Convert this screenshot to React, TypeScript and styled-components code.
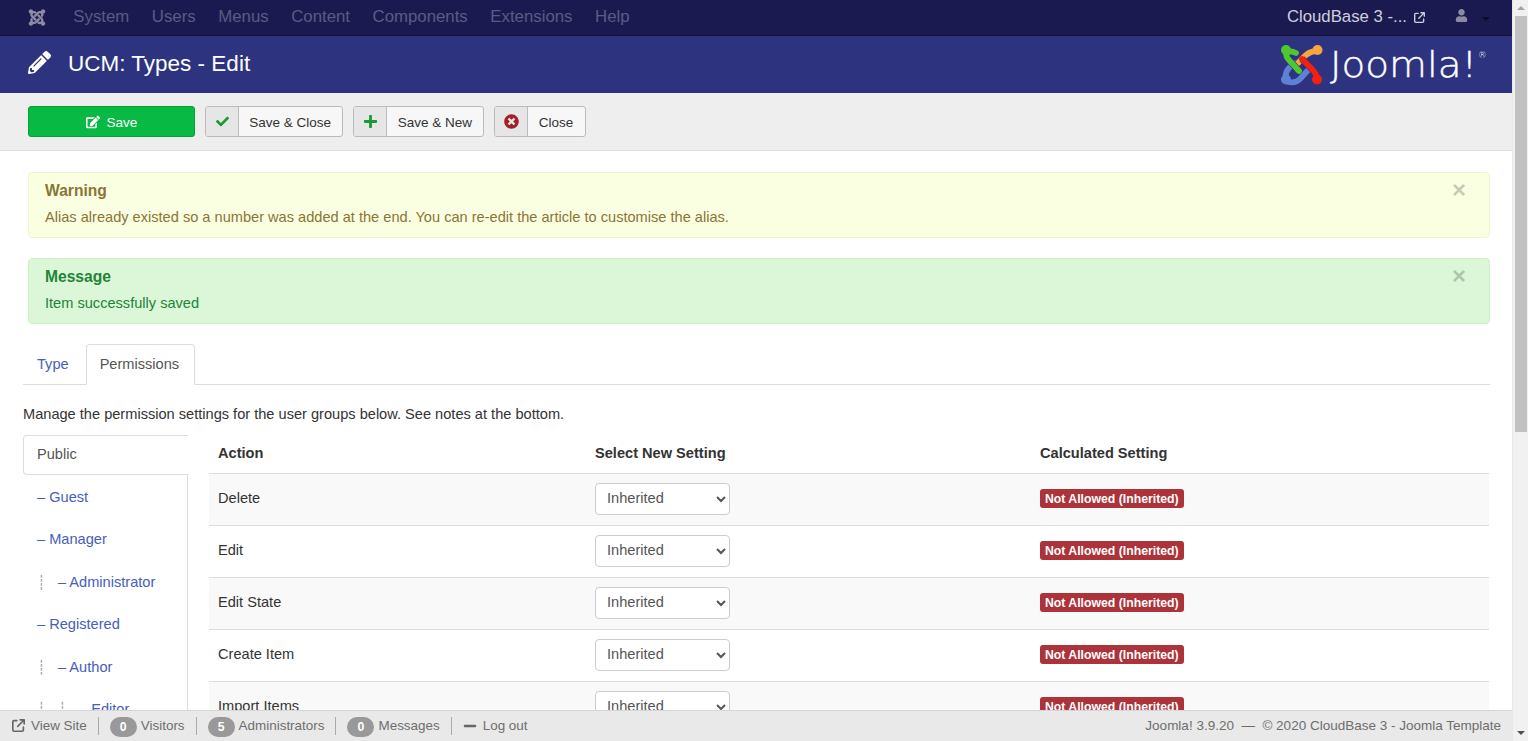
import { createGlobalStyle, styled } from "styled-components";
import { FaCheck, FaEdit, FaJoomla, FaMinus, FaPencilAlt, FaPlus, FaTimesCircle, FaUser } from "react-icons/fa";
import { FaArrowUpRightFromSquare } from "react-icons/fa6";

const GlobalStyle = createGlobalStyle`
  * { box-sizing: border-box; }
  html, body { margin: 0; height: 100%; overflow: hidden; }
  body {
    font-family: "Liberation Sans", Arial, sans-serif;
    font-size: 14.6px;
    color: #333;
    background: #fff;
  }
`;

const linkColor = "#4560bb";

const Page = styled.div`
  display: flex;
  height: 100vh;
  overflow: hidden;
`;
const Main = styled.div`
  flex: 1;
  min-width: 0;
  display: flex;
  flex-direction: column;
`;

// top menu
const NavBar = styled.div`
  height: 36px;
  flex: none;
  display: flex;
  align-items: center;
  padding: 0 22px 1px 28px;
  background: #1b1a50;
  border-bottom: 1px solid #14133a;
`;
const NavLogo = styled.span`
  display: flex;
  width: 18px;
  margin-right: 16px;
  color: #8c8aa5;
  font-size: 19px;
`;
const NavItem = styled.span`
  padding: 0 11.3px;
  font-size: 16.8px;
  color: #5b5a84;
`;
const NavRight = styled.div`
  margin-left: auto;
  display: flex;
  align-items: center;
  color: #cfcfdb;
  font-size: 16.75px;
`;
const NavIcon = styled.span`
  display: flex;
  margin-left: 7px;
  font-size: 11px;
`;
const NavUser = styled.span`
  display: flex;
  margin-left: 30px;
  margin-top: -3px;
  color: #8c8aa5;
  font-size: 13px;
`;
const Caret = styled.span`
  width: 0;
  height: 0;
  margin-left: 14px;
  margin-top: 3px;
  border-left: 4px solid transparent;
  border-right: 4px solid transparent;
  border-top: 4px solid #0c0b2c;
`;

// page title
const TitleBar = styled.div`
  height: 57px;
  flex: none;
  display: flex;
  align-items: center;
  padding: 0 28px;
  background: #2d337f;
  color: #fff;
`;
const TitleIcon = styled.span`
  display: flex;
  font-size: 23px;
  margin-right: 17px;
  margin-top: -5px;
`;
const Title = styled.h1`
  margin: -2px 0 0;
  font-size: 22.5px;
  font-weight: 400;
`;
const Brand = styled.div`
  margin-left: auto;
  display: flex;
  align-items: center;
`;
const Wordmark = styled.span`
  position: relative;
  width: 154px;
  margin-left: 7px;
  font-family: "DejaVu Sans", sans-serif;
  font-weight: 200;
  font-size: 36px;
  line-height: 40px;
  color: #fff;
  -webkit-text-stroke: 0.4px #fff;
  transform: scaleX(1.08);
  transform-origin: left center;
  white-space: nowrap;
  sup {
    position: absolute;
    left: 137px;
    top: 7px;
    font-size: 8px;
    line-height: 1;
    -webkit-text-stroke: 0;
  }
`;

// toolbar
const Toolbar = styled.div`
  height: 58px;
  flex: none;
  display: flex;
  align-items: center;
  gap: 10px;
  padding: 0 28px;
  background: #eee;
  border-bottom: 1px solid #ddd;
`;
const SaveButton = styled.button`
  width: 167px;
  height: 31px;
  display: flex;
  align-items: center;
  justify-content: center;
  gap: 7px;
  padding: 1px 0 0;
  font: inherit;
  font-size: 13.5px;
  color: #fff;
  background: #08b944;
  border: 1px solid #07a03b;
  border-radius: 3px;
`;
const ToolButton = styled.button`
  height: 31px;
  display: flex;
  align-items: stretch;
  padding: 0;
  font: inherit;
  font-size: 13.5px;
  color: #333;
  background: #f7f7f7;
  border: 1px solid #bbb;
  border-radius: 3px;
  overflow: hidden;
`;
const ToolIcon = styled.span<{ $color: string; $size: number }>`
  width: 33px;
  display: flex;
  align-items: center;
  justify-content: center;
  background: #e6e6e6;
  border-right: 1px solid #bbb;
  color: ${(p) => p.$color};
  font-size: ${(p) => p.$size}px;
`;
const ToolLabel = styled.span`
  display: flex;
  align-items: center;
  padding: 1px 11.5px 0 10.2px;
`;

// scrolling area
const Content = styled.div`
  flex: 1;
  min-height: 0;
  overflow: hidden;
  padding: 21px 22px 0 23px;
`;
const Alert = styled.div<{ $kind: "warning" | "success" }>`
  position: relative;
  height: 66px;
  margin: 0 0 20px 5px;
  padding: 9px 16px;
  border-radius: 4px;
  border: 1px solid ${(p) => (p.$kind === "warning" ? "#f6f2c8" : "#cdf0c2")};
  background: ${(p) => (p.$kind === "warning" ? "#fbffe2" : "#dcf7d7")};
  color: ${(p) => (p.$kind === "warning" ? "#8a7535" : "#20843a")};
`;
const AlertTitle = styled.div`
  font-size: 15.6px;
  font-weight: 700;
  line-height: 18px;
  margin-bottom: 7px;
`;
const AlertText = styled.div`
  line-height: 20px;
`;
const AlertClose = styled.span`
  position: absolute;
  top: 5px;
  right: 23px;
  font-size: 24px;
  font-weight: 700;
  line-height: 24px;
  color: #000;
  opacity: 0.2;
`;

const Tabs = styled.div`
  display: flex;
  gap: 3px;
  height: 41px;
  border-bottom: 1px solid #ddd;
`;
const Tab = styled.div<{ $active?: boolean }>`
  height: 41px;
  padding: 0 ${(p) => (p.$active ? 15 : 13)}px 0 13px;
  line-height: 39px;
  border: 1px solid ${(p) => (p.$active ? "#ddd" : "transparent")};
  border-bottom-color: ${(p) => (p.$active ? "#fff" : "transparent")};
  border-radius: 4px 4px 0 0;
  background: ${(p) => (p.$active ? "#fff" : "transparent")};
  color: ${(p) => (p.$active ? "#555" : linkColor)};
`;
const Intro = styled.p`
  margin: 20px 0 11px;
  line-height: 19px;
`;
const Columns = styled.div`
  display: flex;
  align-items: flex-start;
  gap: 21px;
  padding-right: 1px;
`;
const GroupList = styled.div`
  width: 165px;
  flex: none;
  border-right: 1px solid #ddd;
  height: 300px;
`;
const ActiveGroup = styled.div`
  height: 40px;
  margin-right: -1px;
  padding-left: 13px;
  line-height: 37px;
  color: #555;
  background: #fff;
  border: 1px solid #ddd;
  border-right: none;
  border-radius: 4px 0 0 4px;
`;
const GroupItem = styled.div`
  height: 42.5px;
  padding: 1px 0 0 14px;
  display: flex;
  align-items: center;
  color: ${linkColor};
`;
const Level = styled.span`
  width: 21px;
  flex: none;
  font-family: "DejaVu Sans", sans-serif;
  font-size: 14px;
  color: #999;
  line-height: 1;
`;

const Table = styled.table`
  flex: 1;
  min-width: 0;
  width: 1280px;
  table-layout: fixed;
  border-collapse: collapse;
`;
const Th = styled.th<{ $width?: number }>`
  height: 38px;
  padding: 0 9px 2px;
  text-align: left;
  font-size: 14.6px;
  font-weight: 700;
  vertical-align: middle;
  width: ${(p) => (p.$width ? `${p.$width}px` : "auto")};
`;
const Row = styled.tr<{ $odd: boolean }>`
  background: ${(p) => (p.$odd ? "#f9f9f9" : "#fff")};
`;
const Td = styled.td`
  height: 52px;
  padding: 0 9px;
  border-top: 1px solid #ddd;
  vertical-align: middle;
`;
const ActionCell = styled(Td)`
  padding-bottom: 2px;
`;
const Select = styled.select`
  display: block;
  width: 135px;
  height: 32px;
  padding: 0 7px 2px;
  font-family: inherit;
  font-size: 14.6px;
  color: #555;
  background: #fff;
  border: 1px solid #ccc;
  border-radius: 4px;
`;
const Badge = styled.span`
  display: inline-block;
  height: 19px;
  margin-bottom: 2px;
  padding: 0 5px;
  line-height: 20px;
  font-size: 12.25px;
  font-weight: 700;
  color: #fff;
  background: #ab3339;
  border-radius: 3px;
  vertical-align: middle;
`;

// bottom status bar
const Footer = styled.div`
  height: 31px;
  flex: none;
  display: flex;
  align-items: center;
  padding: 0 11px 1px 12px;
  font-size: 13.45px;
  color: #6e6e6e;
  background: #e9e9e9;
  border-top: 1px solid #d6d6d6;
`;
const FooterIcon = styled.span<{ $size: number }>`
  display: flex;
  margin-right: 6px;
  font-size: ${(p) => p.$size}px;
  color: #666;
`;
const Sep = styled.span`
  width: 1px;
  height: 18px;
  margin: 0 11px;
  background: #aaa;
`;
const Count = styled.span`
  width: 27px;
  height: 20px;
  margin: 2px 4px 0 0;
  border-radius: 10px;
  text-align: center;
  line-height: 20px;
  font-size: 12.25px;
  font-weight: 700;
  color: #fff;
  background: #999;
`;
const Version = styled.span`
  margin-left: auto;
  font-size: 13.5px;
`;

// fake window scrollbar
const Scrollbar = styled.div`
  width: 16px;
  flex: none;
  display: flex;
  flex-direction: column;
  align-items: center;
  background: #f1f1f1;
  border-left: 1px solid #e8e8e8;
`;
const ArrowUp = styled.span`
  width: 0;
  height: 0;
  margin-top: 6px;
  border-left: 4px solid transparent;
  border-right: 4px solid transparent;
  border-bottom: 4px solid #a3a3a3;
`;
const Thumb = styled.span`
  width: 12px;
  height: 416px;
  margin-top: 6px;
  background: #c1c1c1;
`;
const ArrowDown = styled.span`
  width: 0;
  height: 0;
  margin-top: auto;
  margin-bottom: 6px;
  border-left: 4px solid transparent;
  border-right: 4px solid transparent;
  border-top: 4px solid #505050;
`;

const markPieces = [
  { color: "#5e81d6", d: "M4.5 35 Q4 28 8 24 L13 19 M6 37.5 Q14 40 19 35 L29 24", cx: 5, cy: 35.5 },
  { color: "#f9a541", d: "M36 7 Q30 7 25 11 L14 22", cx: 36.5, cy: 6 },
  { color: "#4fc72f", d: "M15 9 Q9 6 5 9 Q5 13 8 16 L18 27", cx: 5, cy: 6 },
  { color: "#f2200f", d: "M21 15 L31 25 Q36 30 36 36", cx: 36, cy: 35.5 },
];

const JoomlaMark = () => (
  <svg width="42" height="42" viewBox="0 0 42 42" fill="none" strokeLinecap="round">
    {markPieces.map((p) => (
      <g key={p.color}>
        <path d={p.d} stroke="#2d337f" strokeWidth="7" strokeLinecap="butt" />
        <path d={p.d} stroke={p.color} strokeWidth="5.8" />
        <circle cx={p.cx} cy={p.cy} r="5" fill={p.color} />
      </g>
    ))}
  </svg>
);

const menu = ["System", "Users", "Menus", "Content", "Components", "Extensions", "Help"];
const groups = [
  { name: "– Guest", level: 0 },
  { name: "– Manager", level: 0 },
  { name: "– Administrator", level: 1 },
  { name: "– Registered", level: 0 },
  { name: "– Author", level: 1 },
  { name: "– Editor", level: 2 },
];
const actions = ["Delete", "Edit", "Edit State", "Create Item", "Import Items"];

export default function App() {
  return (
    <Page>
      <GlobalStyle />
      <Main>
        <NavBar>
          <NavLogo>
            <FaJoomla />
          </NavLogo>
          {menu.map((m) => (
            <NavItem key={m}>{m}</NavItem>
          ))}
          <NavRight>
            CloudBase 3 -...
            <NavIcon>
              <FaArrowUpRightFromSquare />
            </NavIcon>
            <NavUser>
              <FaUser />
            </NavUser>
            <Caret />
          </NavRight>
        </NavBar>
        <TitleBar>
          <TitleIcon>
            <FaPencilAlt />
          </TitleIcon>
          <Title>UCM: Types - Edit</Title>
          <Brand>
            <JoomlaMark />
            <Wordmark>
              Joomla!<sup>®</sup>
            </Wordmark>
          </Brand>
        </TitleBar>
        <Toolbar>
          <SaveButton>
            <FaEdit size={14} />
            Save
          </SaveButton>
          <ToolButton>
            <ToolIcon $color="#1a9a37" $size={13}>
              <FaCheck />
            </ToolIcon>
            <ToolLabel>Save &amp; Close</ToolLabel>
          </ToolButton>
          <ToolButton>
            <ToolIcon $color="#1a9a37" $size={15}>
              <FaPlus />
            </ToolIcon>
            <ToolLabel>Save &amp; New</ToolLabel>
          </ToolButton>
          <ToolButton>
            <ToolIcon $color="#a51f27" $size={15}>
              <FaTimesCircle />
            </ToolIcon>
            <ToolLabel>Close</ToolLabel>
          </ToolButton>
        </Toolbar>
        <Content>
          <Alert $kind="warning">
            <AlertClose>×</AlertClose>
            <AlertTitle>Warning</AlertTitle>
            <AlertText>
              Alias already existed so a number was added at the end. You can re-edit the article to customise the alias.
            </AlertText>
          </Alert>
          <Alert $kind="success">
            <AlertClose>×</AlertClose>
            <AlertTitle>Message</AlertTitle>
            <AlertText>Item successfully saved</AlertText>
          </Alert>
          <Tabs>
            <Tab>Type</Tab>
            <Tab $active>Permissions</Tab>
          </Tabs>
          <Intro>Manage the permission settings for the user groups below. See notes at the bottom.</Intro>
          <Columns>
            <GroupList>
              <ActiveGroup>Public</ActiveGroup>
              {groups.map((g) => (
                <GroupItem key={g.name}>
                  {Array.from({ length: g.level }).map((_, i) => (
                    <Level key={i}>┊</Level>
                  ))}
                  {g.name}
                </GroupItem>
              ))}
            </GroupList>
            <Table>
              <thead>
                <tr>
                  <Th $width={377}>Action</Th>
                  <Th $width={445}>Select New Setting</Th>
                  <Th>Calculated Setting</Th>
                </tr>
              </thead>
              <tbody>
                {actions.map((a, i) => (
                  <Row key={a} $odd={i % 2 === 0}>
                    <ActionCell>{a}</ActionCell>
                    <Td>
                      <Select defaultValue="Inherited">
                        <option>Inherited</option>
                        <option>Allowed</option>
                        <option>Denied</option>
                      </Select>
                    </Td>
                    <Td>
                      <Badge>Not Allowed (Inherited)</Badge>
                    </Td>
                  </Row>
                ))}
              </tbody>
            </Table>
          </Columns>
        </Content>
        <Footer>
          <FooterIcon $size={13}>
            <FaArrowUpRightFromSquare />
          </FooterIcon>
          View Site
          <Sep />
          <Count>0</Count>
          Visitors
          <Sep />
          <Count>5</Count>
          Administrators
          <Sep />
          <Count>0</Count>
          Messages
          <Sep />
          <FooterIcon $size={14}>
            <FaMinus />
          </FooterIcon>
          Log out
          <Version>Joomla! 3.9.20 &nbsp;—&nbsp; © 2020 CloudBase 3 - Joomla Template</Version>
        </Footer>
      </Main>
      <Scrollbar>
        <ArrowUp />
        <Thumb />
        <ArrowDown />
      </Scrollbar>
    </Page>
  );
}
